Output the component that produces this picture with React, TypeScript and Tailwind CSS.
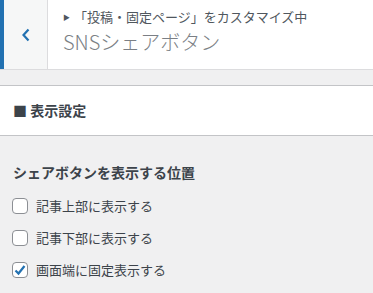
import React from "react";

const font = { fontFamily: '"Noto Sans CJK JP", "Noto Sans", sans-serif' };

function Check({ checked, label }: { checked?: boolean; label: string }) {
  return (
    <label className="flex items-center gap-x-2 h-[32px]">
      <span className="w-[16px] h-[16px] rounded-[4px] border border-[#8c8f94] bg-white flex items-center justify-center">
        {checked && (
          <svg width="14" height="14" viewBox="0 0 14 14">
            <path
              d="M2.5 7.5 L5.5 10.5 L11.5 3"
              fill="none"
              stroke="#2271b1"
              strokeWidth="2.2"
            />
          </svg>
        )}
      </span>
      <span className="text-[13px] text-[#3c434a]">{label}</span>
    </label>
  );
}

export default function App() {
  return (
    <div className="w-[373px] h-[293px] bg-[#f0f0f1] overflow-hidden" style={font}>
      <div className="flex h-[70px] bg-white border-b border-[#dcdcde]">
        <div className="w-[48px] border-l-4 border-[#2271b1] bg-[#f6f7f7] border-r border-r-[#dcdcde] flex items-center justify-center">
          <svg width="12" height="16" viewBox="0 0 12 16">
            <path
              d="M8.5 2.5 L3.5 8 L8.5 13.5"
              fill="none"
              stroke="#2271b1"
              strokeWidth="2.2"
            />
          </svg>
        </div>
        <div className="pl-[15px] pt-[7px]">
          <div className="flex items-center text-[13px] text-[#50575e] leading-[20px]">
            <span className="text-[7px] mr-[4px]">▶</span>
            <span>「投稿・固定ページ」をカスタマイズ中</span>
          </div>
          <div className="text-[20px] font-extralight text-[#7b7f85] leading-[30px]">
            SNSシェアボタン
          </div>
        </div>
      </div>
      <div className="h-[16px] border-b border-[#c3c4c7]"></div>
      <div className="h-[50px] bg-white border-b border-[#c3c4c7] flex items-center px-[13px]">
        <span className="text-[14px] font-bold text-[#3c434a]">■ 表示設定</span>
      </div>
      <div className="px-[12px] pt-[24px]">
        <div className="text-[14px] font-bold text-[#3c434a] leading-[24px] mb-[6px] pl-[1px]">
          シェアボタンを表示する位置
        </div>
        <Check label="記事上部に表示する" />
        <Check label="記事下部に表示する" />
        <Check checked label="画面端に固定表示する" />
      </div>
    </div>
  );
}
